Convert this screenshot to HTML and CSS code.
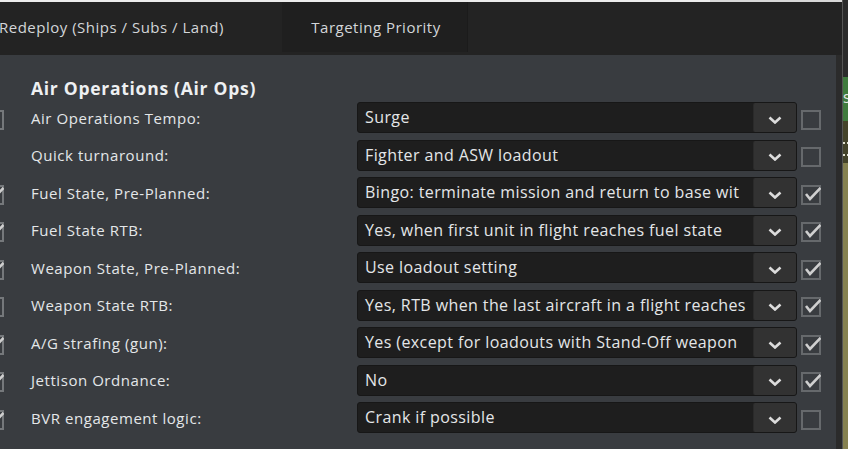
FILE: index.html
```html
<!DOCTYPE html>
<html>
<head>
<meta charset="utf-8">
<link rel="stylesheet" href="styles.css">
</head>
<body>
<div class="app">
  <div class="main">
    <div class="topline"></div>
    <div class="tabbar">
      <div class="tab tab-first">Redeploy (Ships / Subs / Land)</div>
      <div class="tab tab-second">Targeting Priority</div>
    </div>
    <div class="body">
      <div class="panel">
        <div class="heading">Air Operations (Air Ops)</div>
        <div class="rows">
          <div class="row">
            <span class="cb cb-left"></span>
            <span class="label">Air Operations Tempo:</span>
            <div class="select"><span class="value">Surge</span><span class="btn"><svg width="14" height="8" viewBox="0 0 14 8"><path d="M1.5 1.5 L7 6.5 L12.5 1.5" fill="none" stroke="#dcdcdc" stroke-width="2.6"/></svg></span></div>
            <span class="cb"></span>
          </div>
          <div class="row">
            <span class="cb cb-left cb-none"></span>
            <span class="label">Quick turnaround:</span>
            <div class="select"><span class="value">Fighter and ASW loadout</span><span class="btn"><svg width="14" height="8" viewBox="0 0 14 8"><path d="M1.5 1.5 L7 6.5 L12.5 1.5" fill="none" stroke="#dcdcdc" stroke-width="2.6"/></svg></span></div>
            <span class="cb"></span>
          </div>
          <div class="row">
            <span class="cb cb-left cb-on"><svg width="19" height="19" viewBox="0 0 19 19"><path d="M4 10 L8 15 L18.5 4" fill="none" stroke="#cfcfcf" stroke-width="2.6"/></svg></span>
            <span class="label">Fuel State, Pre-Planned:</span>
            <div class="select"><span class="value">Bingo: terminate mission and return to base wit</span><span class="btn"><svg width="14" height="8" viewBox="0 0 14 8"><path d="M1.5 1.5 L7 6.5 L12.5 1.5" fill="none" stroke="#dcdcdc" stroke-width="2.6"/></svg></span></div>
            <span class="cb cb-on"><svg width="19" height="19" viewBox="0 0 19 19"><path d="M4 10 L8 15 L18.5 4" fill="none" stroke="#cfcfcf" stroke-width="2.6"/></svg></span>
          </div>
          <div class="row">
            <span class="cb cb-left cb-on"><svg width="19" height="19" viewBox="0 0 19 19"><path d="M4 10 L8 15 L18.5 4" fill="none" stroke="#cfcfcf" stroke-width="2.6"/></svg></span>
            <span class="label">Fuel State RTB:</span>
            <div class="select"><span class="value">Yes, when first unit in flight reaches fuel state</span><span class="btn"><svg width="14" height="8" viewBox="0 0 14 8"><path d="M1.5 1.5 L7 6.5 L12.5 1.5" fill="none" stroke="#dcdcdc" stroke-width="2.6"/></svg></span></div>
            <span class="cb cb-on"><svg width="19" height="19" viewBox="0 0 19 19"><path d="M4 10 L8 15 L18.5 4" fill="none" stroke="#cfcfcf" stroke-width="2.6"/></svg></span>
          </div>
          <div class="row">
            <span class="cb cb-left cb-on"><svg width="19" height="19" viewBox="0 0 19 19"><path d="M4 10 L8 15 L18.5 4" fill="none" stroke="#cfcfcf" stroke-width="2.6"/></svg></span>
            <span class="label">Weapon State, Pre-Planned:</span>
            <div class="select"><span class="value">Use loadout setting</span><span class="btn"><svg width="14" height="8" viewBox="0 0 14 8"><path d="M1.5 1.5 L7 6.5 L12.5 1.5" fill="none" stroke="#dcdcdc" stroke-width="2.6"/></svg></span></div>
            <span class="cb cb-on"><svg width="19" height="19" viewBox="0 0 19 19"><path d="M4 10 L8 15 L18.5 4" fill="none" stroke="#cfcfcf" stroke-width="2.6"/></svg></span>
          </div>
          <div class="row">
            <span class="cb cb-left"></span>
            <span class="label">Weapon State RTB:</span>
            <div class="select"><span class="value">Yes, RTB when the last aircraft in a flight reaches</span><span class="btn"><svg width="14" height="8" viewBox="0 0 14 8"><path d="M1.5 1.5 L7 6.5 L12.5 1.5" fill="none" stroke="#dcdcdc" stroke-width="2.6"/></svg></span></div>
            <span class="cb cb-on"><svg width="19" height="19" viewBox="0 0 19 19"><path d="M4 10 L8 15 L18.5 4" fill="none" stroke="#cfcfcf" stroke-width="2.6"/></svg></span>
          </div>
          <div class="row">
            <span class="cb cb-left cb-on"><svg width="19" height="19" viewBox="0 0 19 19"><path d="M4 10 L8 15 L18.5 4" fill="none" stroke="#cfcfcf" stroke-width="2.6"/></svg></span>
            <span class="label">A/G strafing (gun):</span>
            <div class="select"><span class="value">Yes (except for loadouts with Stand-Off weapon</span><span class="btn"><svg width="14" height="8" viewBox="0 0 14 8"><path d="M1.5 1.5 L7 6.5 L12.5 1.5" fill="none" stroke="#dcdcdc" stroke-width="2.6"/></svg></span></div>
            <span class="cb cb-on"><svg width="19" height="19" viewBox="0 0 19 19"><path d="M4 10 L8 15 L18.5 4" fill="none" stroke="#cfcfcf" stroke-width="2.6"/></svg></span>
          </div>
          <div class="row">
            <span class="cb cb-left cb-on"><svg width="19" height="19" viewBox="0 0 19 19"><path d="M4 10 L8 15 L18.5 4" fill="none" stroke="#cfcfcf" stroke-width="2.6"/></svg></span>
            <span class="label">Jettison Ordnance:</span>
            <div class="select"><span class="value">No</span><span class="btn"><svg width="14" height="8" viewBox="0 0 14 8"><path d="M1.5 1.5 L7 6.5 L12.5 1.5" fill="none" stroke="#dcdcdc" stroke-width="2.6"/></svg></span></div>
            <span class="cb cb-on"><svg width="19" height="19" viewBox="0 0 19 19"><path d="M4 10 L8 15 L18.5 4" fill="none" stroke="#cfcfcf" stroke-width="2.6"/></svg></span>
          </div>
          <div class="row">
            <span class="cb cb-left cb-on"><svg width="19" height="19" viewBox="0 0 19 19"><path d="M4 10 L8 15 L18.5 4" fill="none" stroke="#cfcfcf" stroke-width="2.6"/></svg></span>
            <span class="label">BVR engagement logic:</span>
            <div class="select"><span class="value">Crank if possible</span><span class="btn"><svg width="14" height="8" viewBox="0 0 14 8"><path d="M1.5 1.5 L7 6.5 L12.5 1.5" fill="none" stroke="#dcdcdc" stroke-width="2.6"/></svg></span></div>
            <span class="cb"></span>
          </div>
        </div>
      </div>
      <div class="gutter"></div>
    </div>
  </div>
  <div class="divider"></div>
  <div class="map">
    <div class="map-dark"></div>
    <div class="map-green">S</div>
    <div class="map-road"><span class="dash"></span><span class="dash"></span></div>
    <div class="map-olive"></div>
  </div>
</div>
</body>
</html>
```
FILE: styles.css
```css
* { box-sizing: border-box; }
html, body {
  margin: 0;
  padding: 0;
  width: 848px;
  height: 449px;
  overflow: hidden;
  background: #2a2a2a;
  font-family: "Open Sans", "Noto Sans", sans-serif;
}
.app {
  display: flex;
  width: 848px;
  height: 449px;
}
.main {
  width: 842px;
  display: flex;
  flex-direction: column;
  background: #232323;
}
.topline {
  height: 2px;
  background: linear-gradient(to right, #ececec 0, #ececec 710px, #d8d8d8 710px);
}
.tabbar {
  height: 53px;
  display: flex;
  background: #232323;
}
.tab {
  height: 50px;
  display: flex;
  align-items: center;
  font-size: 15px;
  letter-spacing: 0.5px;
  color: #d3d6d9;
}
.tab-first {
  width: 283px;
  margin-left: -1px;
}
.tab-second {
  width: 186px;
  justify-content: center;
  padding-left: 3px;
  background: #1f1f1f;
  border-right: 1px solid #1b1b1b;
}
.body {
  flex: 1;
  display: flex;
}
.panel {
  width: 836px;
  background: #393c40;
  padding-top: 21px;
  overflow: hidden;
}
.gutter {
  flex: 1;
  background: #2b2b2b;
}
.heading {
  margin-left: 31px;
  font-size: 17.5px;
  font-weight: 700;
  color: #eef0f2;
  line-height: 24px;
  height: 24px;
  letter-spacing: 0.72px;
}
.rows {
  margin-top: 2px;
  display: flex;
  flex-direction: column;
  gap: 6.5px;
}
.row {
  display: flex;
  align-items: center;
  height: 31px;
}
.cb {
  width: 20px;
  height: 20px;
  border: 2px solid #66696c;
  flex: none;
  margin-top: 4px;
  position: relative;
}
.cb svg {
  position: absolute;
  left: -1px;
  top: -3px;
}
.cb-left {
  margin-left: -16px;
  border-color: #75787b;
}
.cb-none { visibility: hidden; }
.label {
  margin-left: 27px;
  width: 326px;
  font-size: 15px;
  color: #e4e7e9;
  letter-spacing: 0.55px;
  white-space: nowrap;
}
.select {
  width: 440px;
  height: 31px;
  display: flex;
  background: #1e1e1e;
  border: 1px solid #171717;
  border-radius: 3px;
  margin-right: 4px;
}
.value {
  flex: 1;
  padding-left: 7px;
  font-size: 16px;
  letter-spacing: 0.4px;
  color: #e4e6e8;
  line-height: 29px;
  white-space: nowrap;
  overflow: hidden;
}
.btn {
  width: 43px;
  flex: none;
  background: #323232;
  border-left: 1px solid #2a2a2a;
  border-radius: 2px;
  display: flex;
  align-items: center;
  justify-content: center;
  padding-top: 4px;
}
.divider {
  width: 1px;
  background: #555;
}
.map {
  flex: 1;
  display: flex;
  flex-direction: column;
  overflow: hidden;
}
.map-dark { height: 77px; background: #2b2b2b; }
.map-green {
  height: 44px;
  background: #3f7b3d;
  color: #e8e8e8;
  font-size: 12px;
  font-family: "DejaVu Sans", sans-serif;
  line-height: 44px;
  overflow: hidden;
}
.map-road {
  height: 42px;
  background: #44432a;
  display: flex;
  flex-direction: column;
  justify-content: space-around;
  padding: 16px 0 2px;
}
.dash {
  height: 2px;
  background: repeating-linear-gradient(to right, #e0e0d0 0, #e0e0d0 2px, transparent 2px, transparent 4px);
}
.map-olive { flex: 1; background: #858150; }
```
